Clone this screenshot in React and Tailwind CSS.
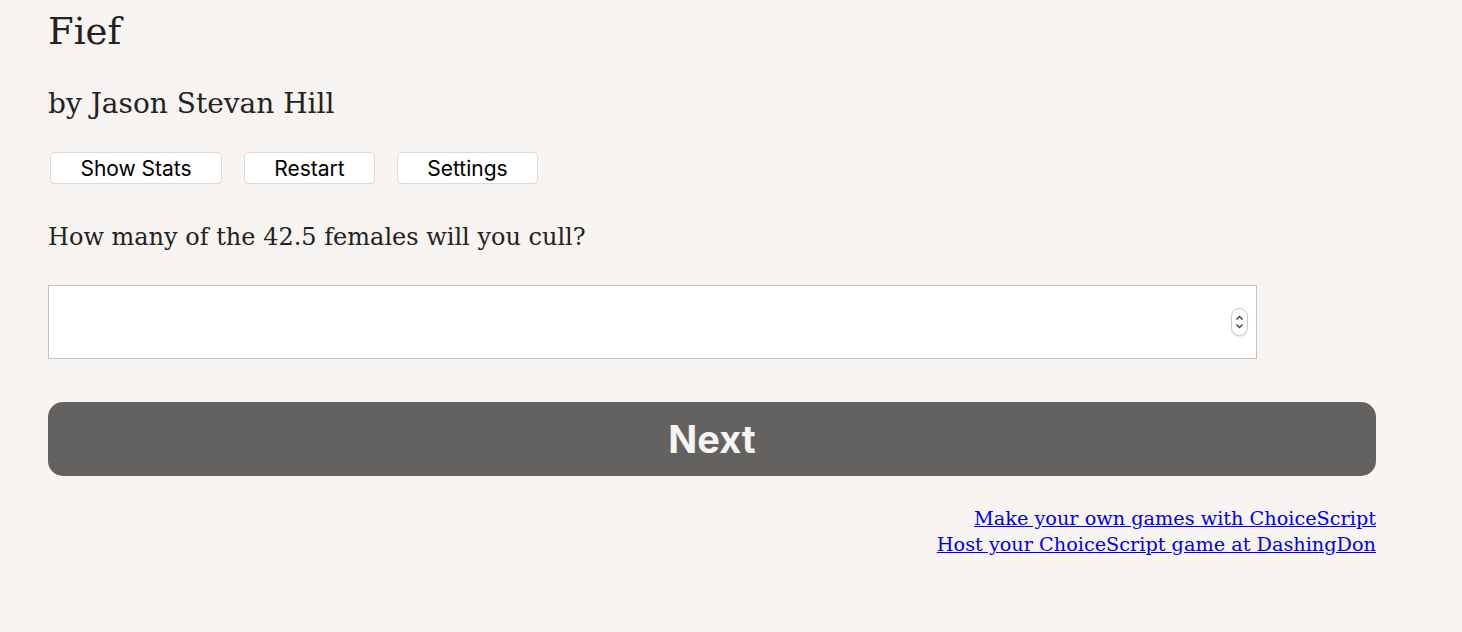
export default function App() {
  const serif = { fontFamily: '"DejaVu Serif", serif' };
  const btn = "h-[30px] rounded-[4px] bg-white text-[21px] text-black shadow-[0_0_0_1px_#dedad7,0_1px_1px_#cbc7c3]";
  return (
    <div className="min-h-[632px] w-full bg-[#f7f4f1] text-[#222]" style={serif}>
      <div className="pl-[48px] w-[1376px]">
        <h1 className="m-0 pt-[8px] text-[37px] leading-[48px] font-normal">Fief</h1>
        <h2 className="mt-[30px] text-[28px] leading-[36px] font-normal">by Jason Stevan Hill</h2>
        <div className="mt-[31px] flex gap-[24px] pl-[3px]" style={{ fontFamily: 'Inter, sans-serif' }}>
          <button className={btn + " w-[170px]"}>Show Stats</button>
          <button className={btn + " w-[129px]"}>Restart</button>
          <button className={btn + " w-[139px]"}>Settings</button>
        </div>
        <p className="mt-[38px] text-[24px] leading-[32px]">How many of the 42.5 females will you cull?</p>
        <div className="mt-[32px] h-[74px] w-[1209px] border border-[#c3c3c3] bg-white flex items-center justify-end pr-[8px]">
          <div className="w-[17px] h-[28px] rounded-full border border-[#c8c8c8] flex flex-col items-center justify-center shadow-[0_1px_1px_#ddd]">
            <svg width="9" height="20" viewBox="0 0 9 20" fill="none" stroke="#444" strokeWidth="1.5">
              <path d="M1.5 7.5 L4.5 4.5 L7.5 7.5" />
              <path d="M1.5 12.5 L4.5 15.5 L7.5 12.5" />
            </svg>
          </div>
        </div>
        <button className="mt-[43px] h-[74px] w-[1328px] rounded-[15px] bg-[#636260] text-[#f7f4f1] text-[38px] font-bold" style={{ fontFamily: 'Inter, "Liberation Sans", sans-serif' }}>Next</button>
        <div className="mt-[30px] flex flex-col items-end text-[19.25px] leading-[26px]">
          <a href="#" className="text-[#0000ee] underline">Make your own games with ChoiceScript</a>
          <a href="#" className="text-[#0000ee] underline">Host your ChoiceScript game at DashingDon</a>
        </div>
      </div>
    </div>
  );
}
